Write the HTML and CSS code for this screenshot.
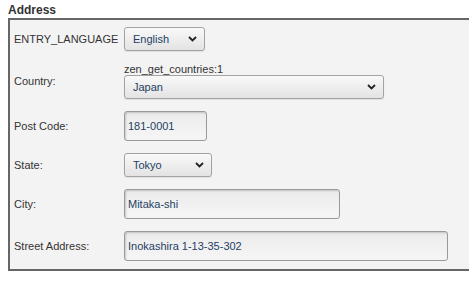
FILE: index.html
```html
<!DOCTYPE html>
<html lang="en">
<head>
  <meta charset="UTF-8">
  <title>Address</title>
  <link rel="stylesheet" href="styles.css">
</head>
<body>
  <h4 class="title">Address</h4>
  <fieldset class="address">
    <label class="lbl" for="lang">ENTRY_LANGUAGE</label>
    <div class="field">
      <span class="sel-wrap w-lang">
        <select id="lang"><option>English</option></select>
        <svg class="chev" width="9" height="6" viewBox="0 0 9 6"><path d="M1 1l3.5 3.5L8 1" fill="none" stroke="#222" stroke-width="1.8"/></svg>
      </span>
    </div>

    <label class="lbl" for="country">Country:</label>
    <div class="field">
      <div class="note">zen_get_countries:1</div>
      <span class="sel-wrap w-country">
        <select id="country"><option>Japan</option></select>
        <svg class="chev" width="9" height="6" viewBox="0 0 9 6"><path d="M1 1l3.5 3.5L8 1" fill="none" stroke="#222" stroke-width="1.8"/></svg>
      </span>
    </div>

    <label class="lbl" for="post">Post Code:</label>
    <div class="field"><input class="w-post" type="text" id="post" value="181-0001"></div>

    <label class="lbl" for="state">State:</label>
    <div class="field">
      <span class="sel-wrap w-state">
        <select id="state"><option>Tokyo</option></select>
        <svg class="chev" width="9" height="6" viewBox="0 0 9 6"><path d="M1 1l3.5 3.5L8 1" fill="none" stroke="#222" stroke-width="1.8"/></svg>
      </span>
    </div>

    <label class="lbl" for="city">City:</label>
    <div class="field"><input class="w-city" type="text" id="city" value="Mitaka-shi"></div>

    <label class="lbl" for="street">Street Address:</label>
    <div class="field"><input class="w-street" type="text" id="street" value="Inokashira 1-13-35-302"></div>
  </fieldset>
</body>
</html>
```

FILE: styles.css
```css
body { margin: 0; padding: 3px 0 0 8px; background: #fff; font-family: "Liberation Sans", Arial, sans-serif; font-size: 11px; color: #333; }
.title { margin: 0 0 1px; font-size: 12px; line-height: 14px; font-weight: bold; color: #333; }
.address { box-sizing: border-box; width: 463px; margin: 0; padding: 7px 0 8px 4px; border: 2px solid #666; background: #f3f3f3; display: grid; grid-template-columns: 110px 1fr; row-gap: 12px; align-items: center; min-inline-size: 0; }
.lbl { color: #333; line-height: 13px; }
.field { display: flex; flex-direction: column; align-items: flex-start; }
.note { line-height: 12px; color: #333; }
.sel-wrap { position: relative; display: block; }
.sel-wrap select { appearance: none; -webkit-appearance: none; box-sizing: border-box; width: 100%; height: 24px; margin: 0; padding: 0 20px 0 8px; border: 1px solid #a3a3a3; border-radius: 3px; background: linear-gradient(#f9f9f9, #e3e3e3); box-shadow: 0 1px 1px rgba(0,0,0,0.08); font-family: inherit; font-size: 11px; color: #243f64; }
.chev { position: absolute; top: 9px; right: 8px; }
.w-lang { width: 81px; }
.w-country { width: 260px; }
.w-state { width: 88px; }
input { box-sizing: border-box; height: 30px; margin: 0; padding: 0 3px; border: 1px solid #9a9a9a; border-radius: 3px; background: linear-gradient(#ebebeb, #f6f6f6); box-shadow: inset 1px 1px 2px rgba(0,0,0,0.18); font-family: inherit; font-size: 11px; color: #243f64; }
.w-post { width: 83px; }
.w-city { width: 216px; }
.w-street { width: 324px; }
```
